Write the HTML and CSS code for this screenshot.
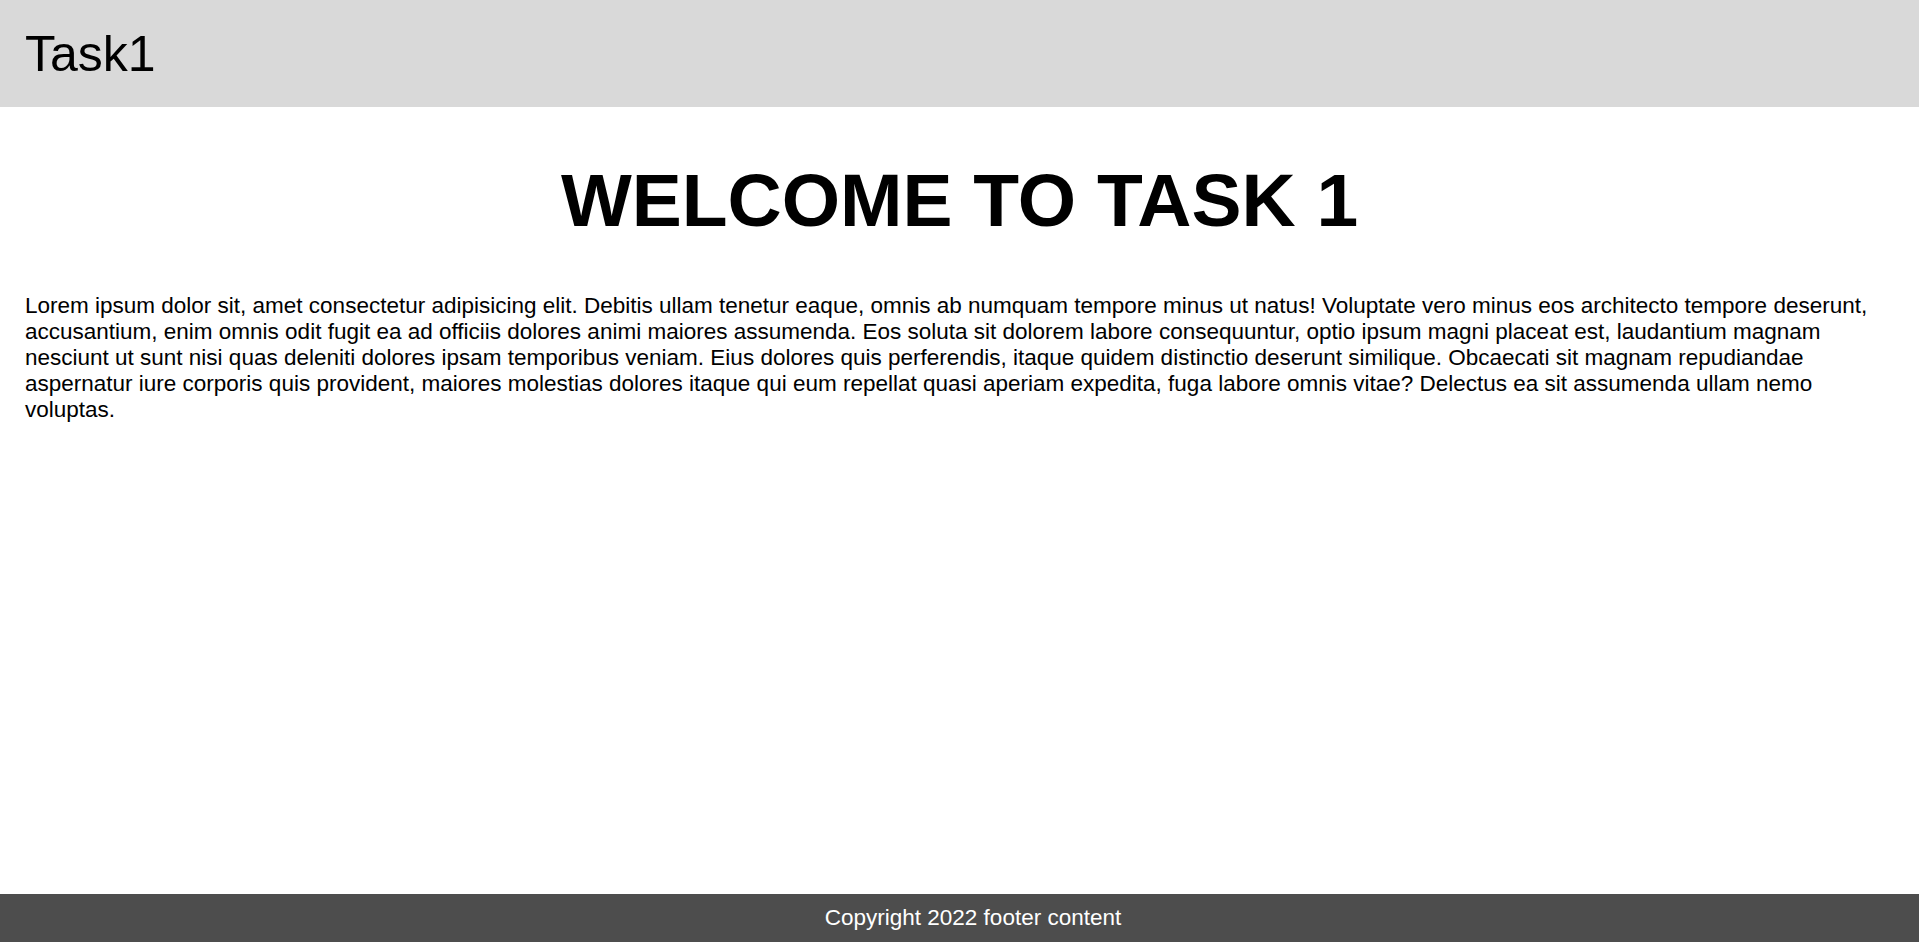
FILE: index.html
```html
<!DOCTYPE html>
<html lang="en">
<head>
<meta charset="utf-8">
<title>Task1</title>
<link rel="stylesheet" href="styles.css">
</head>
<body>
<header class="site-header">
  <div class="brand">Task1</div>
</header>
<main class="content">
  <h1 class="title">WELCOME TO TASK 1</h1>
  <p class="text">Lorem ipsum dolor sit, amet consectetur adipisicing elit. Debitis ullam tenetur eaque, omnis ab numquam tempore minus ut natus! Voluptate vero minus eos architecto tempore deserunt, accusantium, enim omnis odit fugit ea ad officiis dolores animi maiores assumenda. Eos soluta sit dolorem labore consequuntur, optio ipsum magni placeat est, laudantium magnam nesciunt ut sunt nisi quas deleniti dolores ipsam temporibus veniam. Eius dolores quis perferendis, itaque quidem distinctio deserunt similique. Obcaecati sit magnam repudiandae aspernatur iure corporis quis provident, maiores molestias dolores itaque qui eum repellat quasi aperiam expedita, fuga labore omnis vitae? Delectus ea sit assumenda ullam nemo voluptas.</p>
</main>
<footer class="site-footer">Copyright 2022 footer content</footer>
</body>
</html>
```
FILE: styles.css
```css
html, body {
  margin: 0;
  padding: 0;
}
body {
  font-family: "Liberation Sans", Arial, sans-serif;
  color: #000;
  background: #fff;
  min-height: 100vh;
  display: flex;
  flex-direction: column;
}
.site-header {
  background: #d9d9d9;
  padding: 24.5px 25px 24px;
}
.brand {
  font-size: 50px;
  line-height: normal;
}
.content {
  flex: 1;
  padding: 0 25px;
}
.title {
  font-size: 75px;
  font-weight: bold;
  text-align: center;
  margin: 50px 0;
  line-height: normal;
}
.text {
  font-size: 22.5px;
  line-height: normal;
  margin: 0;
}
.site-footer {
  background: #4d4d4d;
  color: #fff;
  text-align: center;
  font-size: 22.5px;
  line-height: normal;
  padding: 11.25px 0 11.25px 27px;
}
```
